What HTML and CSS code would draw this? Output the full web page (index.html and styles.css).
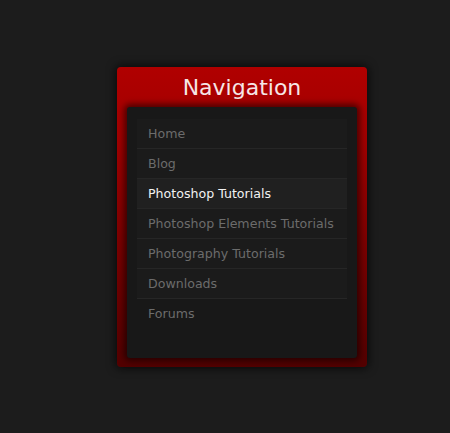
FILE: index.html
```html
<!DOCTYPE html>
<html lang="en">
  <head>
    <meta charset="UTF-8" />
    <meta name="viewport" content="width=device-width, initial-scale=1.0" />
    <title>Navigation</title>
    <link rel="stylesheet" href="styles.css">
  </head>
  <body>
    <div id="navBox">
      <h2 class="nav-title">Navigation</h2>
      <div class="nav-panel">
        <ul class="nav-list">
          <li><a href="#">Home</a></li>
          <li><a href="#">Blog</a></li>
          <li class="active"><a href="#">Photoshop Tutorials</a></li>
          <li><a href="#">Photoshop Elements Tutorials</a></li>
          <li><a href="#">Photography Tutorials</a></li>
          <li><a href="#">Downloads</a></li>
          <li class="last"><a href="#">Forums</a></li>
        </ul>
      </div>
    </div>
  </body>
</html>
```

FILE: styles.css
```css
body {
  margin: 0;
  height: 433px;
  overflow: hidden;
  background-color: #1c1c1c;
  font-family: "DejaVu Sans", sans-serif;
}
#navBox {
  width: 250px;
  height: 300px;
  margin: 67px 0 0 117px;
  box-sizing: border-box;
  padding: 0 10px 9px;
  border-radius: 4px;
  background: linear-gradient(#b00000, #a00000 25%, #7a0000 60%, #520000);
  box-shadow: 0 0 8px 2px rgba(0, 0, 0, 0.6);
  display: flex;
  flex-direction: column;
}
.nav-title {
  margin: 0;
  height: 40px;
  line-height: 42px;
  text-align: center;
  font-weight: normal;
  font-size: 22px;
  color: #f6e6e6;
}
.nav-panel {
  flex: 1;
  background: #181818;
  border-radius: 3px;
  padding: 12px 10px 0;
  box-shadow: 0 0 6px 3px rgba(0, 0, 0, 0.55);
}
.nav-list {
  list-style: none;
  margin: 0;
  padding: 0;
}
.nav-list li {
  height: 30px;
  border-bottom: 1px solid #262626;
  box-sizing: border-box;
  background: #1b1b1b;
}
.nav-list li.last {
  border-bottom: none;
  background: none;
}
.nav-list li.active {
  background: #202020;
}
.nav-list a {
  display: block;
  padding-left: 11px;
  line-height: 30px;
  font-size: 12.6px;
  color: #6c6c6c;
  text-decoration: none;
}
.nav-list li.active a {
  color: #f2f2f2;
}
```
